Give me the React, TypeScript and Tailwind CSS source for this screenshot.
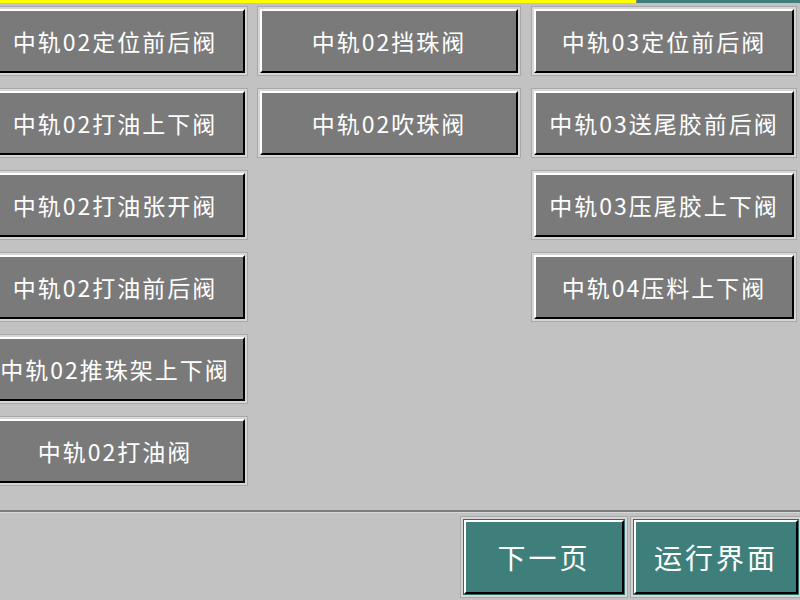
import React from "react";

function Btn({ label }: { label: string }) {
  return (
    <div className="h-[70px] p-[2px] bg-[#d6d6d6] border border-[#a8a8a8]">
      <div className="h-full border-t-2 border-l-2 border-t-white border-l-white border-b-2 border-r-2 border-b-black border-r-black bg-[#7a7a7a] flex items-center justify-center">
        <span className="text-white text-[23px] tracking-[2px] whitespace-nowrap">{label}</span>
      </div>
    </div>
  );
}

function Spacer() {
  return <div className="h-[70px]" />;
}

function TealBtn({ label, w }: { label: string; w: string }) {
  return (
    <div className={`${w} shrink-0 h-[82px] p-[2px] bg-[#d6d6d6] border border-[#a8a8a8]`}>
      <div className="h-full border border-[#2f6c68]">
        <div className="h-full border-t-2 border-l-2 border-t-white border-l-white border-b-2 border-r-2 border-b-black border-r-black bg-[#3f7f7b] flex items-center justify-center">
          <span className="text-white text-[28px] tracking-[3px] whitespace-nowrap">{label}</span>
        </div>
      </div>
    </div>
  );
}

export default function App() {
  const col1 = ["中轨02定位前后阀", "中轨02打油上下阀", "中轨02打油张开阀", "中轨02打油前后阀", "中轨02推珠架上下阀", "中轨02打油阀"];
  const col2 = ["中轨02挡珠阀", "中轨02吹珠阀"];
  const col3 = ["中轨03定位前后阀", "中轨03送尾胶前后阀", "中轨03压尾胶上下阀", "中轨04压料上下阀"];
  return (
    <div
      className="w-[800px] h-[600px] bg-[#c2c2c2] overflow-hidden flex flex-col"
      style={{ fontFamily: '"Noto Sans CJK SC", "Noto Sans", sans-serif' }}
    >
      <div className="flex h-[3px] shrink-0">
        <div className="w-[636px] bg-[#ffff00]" />
        <div className="flex-1 bg-[#3f7f7b] border-l border-[#888]" />
      </div>
      <div className="h-[3px] shrink-0" />
      <div className="flex h-[504px] shrink-0">
        <div className="w-[266px] shrink-0 ml-[-18px] flex flex-col gap-[12px]">
          {col1.map((t) => (
            <Btn key={t} label={t} />
          ))}
        </div>
        <div className="w-[264px] shrink-0 ml-[9px] flex flex-col gap-[12px]">
          {col2.map((t) => (
            <Btn key={t} label={t} />
          ))}
          <Spacer />
        </div>
        <div className="w-[266px] shrink-0 ml-[10px] flex flex-col gap-[12px]">
          {col3.map((t) => (
            <Btn key={t} label={t} />
          ))}
        </div>
      </div>
      <div className="h-[2px] bg-[#7c7c7c] shrink-0" />
      <div className="h-[1px] bg-[#d8d8d8] shrink-0" />
      <div className="flex pt-[3px] pl-[460px] gap-[2px]">
        <TealBtn label="下一页" w="w-[168px]" />
        <TealBtn label="运行界面" w="w-[172px]" />
      </div>
    </div>
  );
}
